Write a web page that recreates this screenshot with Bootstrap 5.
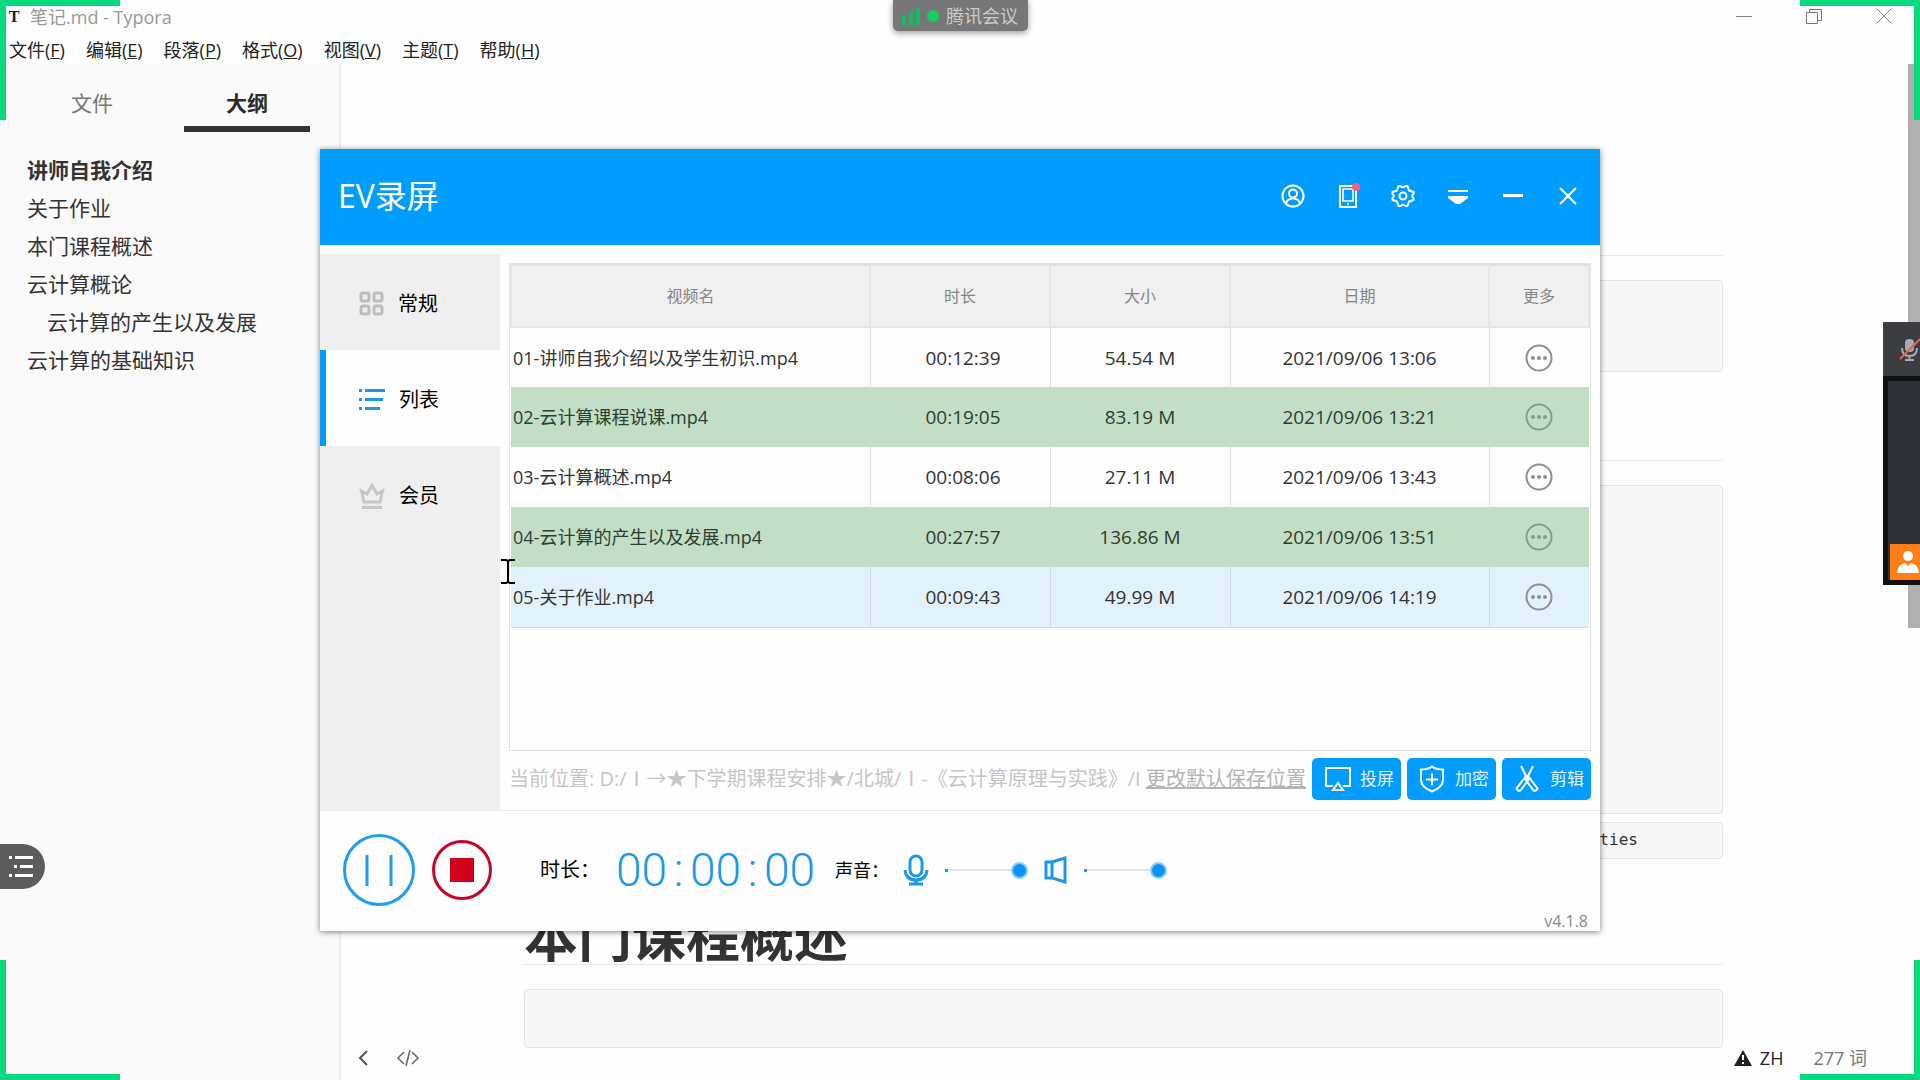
<!DOCTYPE html>
<html lang="zh-CN">
<head>
<meta charset="utf-8">
<meta name="viewport" content="width=device-width, initial-scale=1">
<title>笔记.md - Typora</title>
<link href="https://cdn.jsdelivr.net/npm/bootstrap@5.3.0/dist/css/bootstrap.min.css" rel="stylesheet">
<style>
  :root { --ev: #009dff; --sun: #07d980; }
  body { font-family: "Open Sans", "Noto Sans CJK SC", sans-serif; font-size: 18px; line-height: 24px; color: #333; background: #fefefe; overflow: hidden; }
  button { font-family: inherit; }
  svg { display: block; flex: none; }
  a { color: inherit; text-decoration: none; }
  .plain { background: none; border: 0; padding: 0; color: inherit; }

  /* editor window */
  .titlebar { height: 34px; padding: 0 28px 0 6px; color: #999; }
  .logo-t { width: 16px; font: bold 16px "Liberation Serif", serif; color: #222; text-align: center; }
  .win-ctl { gap: 54px; padding-bottom: 2px; }
  .menubar { height: 30px; padding: 2px 0 0 9px; gap: 21px; color: #222; }
  .outline-pane { width: 341px; background: #fafafa; border-right: 2px solid #ececec; }
  .pane-tabs { padding: 16px 29px 0; }
  .pane-tabs button { width: 126px; height: 52px; font-size: 21px; color: #777; border-bottom: 6px solid transparent; }
  .pane-tabs button.active { color: #2b2b2b; font-weight: 700; border-color: #333; }
  .outline-list { padding: 19px 27px; font-size: 21px; line-height: 38px; }
  .doc-area { padding-right: 2px; }
  .doc { max-width: 1200px; width: 76.6%; padding-top: 191px; }
  .doc-head { border-bottom: 1px solid #e8e8e8; font-size: 54px; line-height: 56px; font-weight: 700; margin: 0; }
  .code-box { background: #f7f7f7; border: 1px solid #e5e5e5; border-radius: 4px; font: 16px/34px "DejaVu Sans Mono", monospace; }
  .scroll-thumb { width: 12px; height: 564px; background: #b0b0b0; }
  .status-left { left: 356px; bottom: 12px; gap: 26px; color: #555; }
  .status-right { right: 53px; bottom: 10px; color: #777; }

  /* recorder window */
  .ev { top: 149px; left: 50%; width: 1280px; margin-left: -640px; background: #fefefe; box-shadow: 0 1px 6px rgba(0,0,0,.5); }
  .ev-head { height: 96px; padding: 0 20px 2px 18px; background: var(--ev); color: #fff; }
  .ev-title { font-size: 32px; line-height: 40px; }
  .ev-tools { gap: 31px; }
  .ev-side { width: 180px; margin-top: 9px; background: #efefef; }
  .ev-side button { height: 96px; padding: 3px 0 0 33px; gap: 14px; font-size: 20px; color: #000; border-left: 6px solid transparent; }
  .ev-side button.active { background: #fefefe; border-color: var(--ev); }
  .ev-main { padding: 18px 9px 10px; min-width: 0; }
  .ev-list { height: 488px; border: 1px solid #e4e4e4; }
  .ev-table { table-layout: fixed; width: 100%; text-align: center; font-size: 19px; }
  .ev-table th { height: 62px; font-size: 16px; font-weight: 400; color: #858585; background: #f0f0f0; border: 2px solid #e6e6e6; border-top-color: #e0e0e0; padding: 0; }
  .ev-table td { height: 60px; border-right: 1px solid #dcdcdc; padding: 0; }
  .ev-table td:last-child { border-right: 0; }
  .ev-table td:first-child { text-align: left; padding-left: 2px; font-size: 18px; }
  .ev-table td:nth-child(2) { padding-left: 6px; }
  .ev-table tr.done td { background: #c4dec6; border-color: #c4dec6; }
  .ev-table tr.done { color: #2c3f30; }
  .ev-table tr.done svg { color: #82a085; }
  .ev-table tr.hovered td { background: #e2f2fc; border-color: #cfdde6; border-bottom: 1px solid #cfdde6; }
  .ev-table svg { color: #8e8e8e; }
  .path-row { margin-top: 7px; gap: 6px; font-size: 20px; color: #c6c6c6; }
  .path-row a { color: #b4b4b4; text-decoration: underline; }
  .ev-btn { width: 89px; height: 42px; background: var(--ev); border: 0; border-radius: 5px; color: #e4f4ff; font-size: 17px; padding: 0 7px 0 12px; }
  .ev-foot { height: 121px; padding: 0 22px 2px; border-top: 1px solid #ececec; color: #000; }
  .lcd { font: 46px/60px Roboto, sans-serif; font-weight: 300; color: #1a98ea; }
  .lcd i { font-style: normal; width: 23px; text-align: center; }
  .vol { -webkit-appearance: none; appearance: none; width: 83px; height: 18px; background: linear-gradient(#1a98ea,#1a98ea) 0 8px/3px 3px no-repeat, linear-gradient(#e2e5e7,#e2e5e7) 0 8px/100% 2px no-repeat; }
  .vol::-webkit-slider-thumb { -webkit-appearance: none; width: 17px; height: 17px; border-radius: 50%; background: #0a93fb; border: 2px solid #8cccf8; }
  .version { right: 12px; bottom: 0; font-size: 16px; line-height: 20px; color: #888; }

  /* meeting overlays */
  .meet-tag { top: 0; left: 50%; width: 135px; height: 31px; margin-left: -67px; background: #777; color: #ccc; border-radius: 0 0 5px 5px; box-shadow: 0 2px 6px rgba(0,0,0,.4); gap: 7px; padding-left: 9px; }
  .corner { width: 120px; height: 120px; pointer-events: none; border: 0 solid var(--sun); z-index: 5; }
  .c-tl { top: 0; left: 0; border-width: 6px 0 0 6px; }
  .c-tr { top: 0; right: 0; border-width: 6px 6px 0 0; }
  .c-bl { bottom: 0; left: 0; border-width: 0 0 6px 6px; }
  .c-br { bottom: 0; right: 0; border-width: 0 6px 6px 0; }
  .meet-side { top: 322px; right: 0; width: 37px; background: #2e3135; }
  .meet-mic { height: 54px; background: #3c3d41; padding-left: 14px; }
  .meet-cam { height: 209px; border: solid #101113; border-width: 5px 0 5px 5px; }
  .meet-user { width: 30px; height: 36px; background: #ff7f16; }
  .meet-pill { left: 0; top: 844px; width: 45px; height: 45px; background: #5c5c5c; border-radius: 0 23px 23px 0; padding-left: 9px; }
  .ibeam { left: 501px; top: 559px; }
</style>
</head>
<body>
<div class="d-flex flex-column vh-100 position-relative overflow-hidden">
  <header class="titlebar d-flex align-items-center">
    <span class="logo-t">T</span>
    <span class="ms-2">笔记.md - Typora</span>
    <div class="win-ctl d-flex align-items-center ms-auto">
      <button class="plain" aria-label="最小化"><svg width="16" height="16" fill="none" stroke="#888"><path d="M0 8.5h16"/></svg></button>
      <button class="plain" aria-label="还原"><svg width="16" height="16" fill="none" stroke="#777"><path d="M.5 4.5h11v11H.5zM3.500 4V1.500h12v11H12"/></svg></button>
      <button class="plain" aria-label="关闭"><svg width="16" height="16" fill="none" stroke="#888"><path d="M.5.5l15 15M15.500.5l-15 15"/></svg></button>
    </div>
  </header>
  <nav class="menubar d-flex align-items-center">
    <a href="#">文件(<u>F</u>)</a><a href="#">编辑(<u>E</u>)</a><a href="#">段落(<u>P</u>)</a><a href="#">格式(<u>O</u>)</a><a href="#">视图(<u>V</u>)</a><a href="#">主题(<u>T</u>)</a><a href="#">帮助(<u>H</u>)</a>
  </nav>
  <div class="d-flex flex-grow-1 overflow-hidden">
    <aside class="outline-pane flex-shrink-0">
      <div class="pane-tabs d-flex justify-content-between">
        <button class="plain">文件</button>
        <button class="plain active">大纲</button>
      </div>
      <ul class="outline-list list-unstyled mb-0">
        <li class="fw-bold">讲师自我介绍</li>
        <li>关于作业</li>
        <li>本门课程概述</li>
        <li>云计算概论</li>
        <li class="ps-3"><span class="ms-1">云计算的产生以及发展</span></li>
        <li>云计算的基础知识</li>
      </ul>
    </aside>
    <main class="doc-area flex-grow-1 d-flex justify-content-center">
      <article class="doc">
        <div class="doc-head"></div>
        <div class="code-box mt-4" style="height:92px"></div>
        <div class="doc-head" style="margin-top:88px"></div>
        <div class="code-box mt-4" style="height:329px"></div>
        <div class="code-box mt-2 text-end" style="height:37px;padding-right:84px">ties</div>
        <h1 class="doc-head" style="margin-top:49px">本门课程概述</h1>
        <div class="code-box mt-4" style="height:59px"></div>
      </article>
    </main>
    <div class="scroll-thumb flex-shrink-0"></div>
  </div>

  <div class="status-left position-absolute d-flex align-items-center">
    <button class="plain" aria-label="收起侧栏"><svg width="14" height="20" fill="none" stroke="#555" stroke-width="2"><path d="M11 3L4 10l7 7"/></svg></button>
    <button class="plain" aria-label="源代码模式"><svg width="24" height="20" fill="none" stroke="#666" stroke-width="1.500"><path d="M8 4L2 10l6 6M16 4l6 6-6 6M14 2l-4 16"/></svg></button>
  </div>
  <div class="status-right position-absolute d-flex align-items-center">
    <svg width="18" height="16" viewBox="0 0 18 16"><path fill="#222" d="M9 0l9 16H0z"/><path stroke="#fff" stroke-width="2" d="M9 5v5M9 12v2"/></svg>
    <span class="ms-2 text-dark">ZH</span>
    <span style="margin-left:30px">277 词</span>
  </div>

  <section class="ev position-absolute">
    <header class="ev-head d-flex align-items-center justify-content-between">
      <div class="ev-title">EV录屏</div>
      <div class="ev-tools d-flex align-items-center">
        <button class="plain" aria-label="账户"><svg width="24" height="24" fill="none" stroke="#fff" stroke-width="2"><circle cx="12" cy="12" r="10.500"/><circle cx="12" cy="9.500" r="4"/><path d="M5 19.500c1-4 3.500-5 7-5s6 1 7 5"/></svg></button>
        <button class="plain" aria-label="手机"><svg width="24" height="26" fill="none" stroke="#fff" stroke-width="2"><path d="M4 3h16v21H4z"/><path stroke-width="1.500" d="M7 6h10v12H7z"/><circle cx="12" cy="21" r="1" fill="#fff" stroke="none"/><circle cx="20" cy="4" r="4" fill="#ff5d7e" stroke="none"/></svg></button>
        <button class="plain" aria-label="设置"><svg width="24" height="24" viewBox="0 0 24 24" fill="none" stroke="#fff" stroke-width="2" stroke-linejoin="round"><path d="M7.500 2h2Q12 4.500 14.500 2h2l1.500 4.500 4.500 1.500v2Q20 12 22.500 14v2L18 17.500 16.500 22h-2Q12 19.500 9.500 22h-2L6 17.500 1.500 16v-2Q4 12 1.500 10V8L6 6.500z"/><circle cx="12" cy="12" r="3.500"/></svg></button>
        <button class="plain" aria-label="菜单"><svg width="24" height="24" fill="#fff"><path d="M2 6h20v2H2zM2 12h20v2l-8 6h-4l-8-6z"/></svg></button>
        <button class="plain" aria-label="最小化窗口"><svg width="24" height="24" fill="#fff"><path d="M2 10h20v3H2z"/></svg></button>
        <button class="plain" aria-label="关闭窗口"><svg width="24" height="24" fill="none" stroke="#fff" stroke-width="2"><path d="M4 4l16 16M20 4L4 20"/></svg></button>
      </div>
    </header>
    <div class="d-flex">
      <nav class="ev-side d-flex flex-column flex-shrink-0">
        <button class="plain d-flex align-items-center"><svg width="25" height="26" fill="none" stroke="#bdbdbd" stroke-width="3"><rect x="2" y="2" width="8" height="8" rx="2"/><rect x="15" y="2" width="8" height="8" rx="2"/><rect x="2" y="15" width="8" height="8" rx="2"/><rect x="15" y="15" width="8" height="8" rx="2"/></svg>常规</button>
        <button class="plain active d-flex align-items-center"><svg width="26" height="24" fill="#1a98ea"><path d="M0 1h3v3H0zM6 1h20v3H6zM0 10h3v3H0zM6 10h18v3H6zM0 19h3v3H0zM6 19h15v3H6z"/></svg>列表</button>
        <button class="plain d-flex align-items-center"><svg width="26" height="28" fill="none" stroke="#c6c6c6" stroke-width="3"><path d="M5 20L2.500 9 8 12l5-8.500L18 12l5.500-3L21 20zM3 25.500h20"/></svg>会员</button>
      </nav>
      <div class="ev-main flex-grow-1">
        <div class="ev-list">
          <table class="ev-table">
            <colgroup><col style="width:359px"><col style="width:180px"><col style="width:180px"><col style="width:259px"><col></colgroup>
            <thead><tr><th>视频名</th><th>时长</th><th>大小</th><th>日期</th><th>更多</th></tr></thead>
            <tbody>
              <tr><td>01-讲师自我介绍以及学生初识.mp4</td><td>00:12:39</td><td>54.54 M</td><td>2021/09/06 13:06</td><td><button class="plain d-block mx-auto" aria-label="更多"><svg width="28" height="28" fill="currentColor"><circle cx="14" cy="14" r="12.500" fill="none" stroke="currentColor" stroke-width="2"/><circle cx="8" cy="14" r="2"/><circle cx="14" cy="14" r="2"/><circle cx="20" cy="14" r="2"/></svg></button></td></tr>
              <tr class="done"><td>02-云计算课程说课.mp4</td><td>00:19:05</td><td>83.19 M</td><td>2021/09/06 13:21</td><td><button class="plain d-block mx-auto" aria-label="更多"><svg width="28" height="28" fill="currentColor"><circle cx="14" cy="14" r="12.500" fill="none" stroke="currentColor" stroke-width="2"/><circle cx="8" cy="14" r="2"/><circle cx="14" cy="14" r="2"/><circle cx="20" cy="14" r="2"/></svg></button></td></tr>
              <tr><td>03-云计算概述.mp4</td><td>00:08:06</td><td>27.11 M</td><td>2021/09/06 13:43</td><td><button class="plain d-block mx-auto" aria-label="更多"><svg width="28" height="28" fill="currentColor"><circle cx="14" cy="14" r="12.500" fill="none" stroke="currentColor" stroke-width="2"/><circle cx="8" cy="14" r="2"/><circle cx="14" cy="14" r="2"/><circle cx="20" cy="14" r="2"/></svg></button></td></tr>
              <tr class="done"><td>04-云计算的产生以及发展.mp4</td><td>00:27:57</td><td>136.86 M</td><td>2021/09/06 13:51</td><td><button class="plain d-block mx-auto" aria-label="更多"><svg width="28" height="28" fill="currentColor"><circle cx="14" cy="14" r="12.500" fill="none" stroke="currentColor" stroke-width="2"/><circle cx="8" cy="14" r="2"/><circle cx="14" cy="14" r="2"/><circle cx="20" cy="14" r="2"/></svg></button></td></tr>
              <tr class="hovered"><td>05-关于作业.mp4</td><td>00:09:43</td><td>49.99 M</td><td>2021/09/06 14:19</td><td><button class="plain d-block mx-auto" aria-label="更多"><svg width="28" height="28" fill="currentColor"><circle cx="14" cy="14" r="12.500" fill="none" stroke="currentColor" stroke-width="2"/><circle cx="8" cy="14" r="2"/><circle cx="14" cy="14" r="2"/><circle cx="20" cy="14" r="2"/></svg></button></td></tr>
            </tbody>
          </table>
        </div>
        <div class="path-row d-flex align-items-center">
          <div class="flex-grow-1 overflow-hidden text-nowrap" style="width:0">当前位置: D:/Ⅰ→★下学期课程安排★/北城/Ⅰ-《云计算原理与实践》/I</div>
          <a href="#" class="text-nowrap">更改默认保存位置</a>
          <button class="ev-btn d-flex align-items-center justify-content-between"><svg width="28" height="28" fill="none" stroke="#fff" stroke-width="2"><path d="M9 21H2V3h24v18h-7"/><path d="M9 25l5-7 5 7z"/></svg>投屏</button>
          <button class="ev-btn d-flex align-items-center justify-content-between"><svg width="26" height="28" fill="none" stroke="#fff" stroke-width="2"><path d="M13 1.500Q17 4.500 24 4.500V15q0 7-11 11.500Q2 22 2 15V4.500Q9 4.500 13 1.500zM13 8.500v12M7 14.500h12"/></svg>加密</button>
          <button class="ev-btn d-flex align-items-center justify-content-between"><svg width="26" height="28" fill="none" stroke="#fff" stroke-width="2"><path d="M7 1l5 10 2 5M19 1l-5 10-2 5M12 11L2.500 23.500q1 3 4 2L15 14zM14 11l9.500 12.500q-1 3-4 2L11 14z"/></svg>剪辑</button>
        </div>
      </div>
    </div>
    <footer class="ev-foot d-flex align-items-center position-relative">
      <button class="plain" aria-label="暂停"><svg width="74" height="74" fill="none" stroke="#1f9df2" stroke-width="3"><circle cx="37" cy="37" r="34.500"/><path d="M25 22v31M49 22v31"/></svg></button>
      <button class="plain ms-3" aria-label="停止"><svg width="60" height="60" fill="none" stroke="#c5052a" stroke-width="3"><circle cx="30" cy="30" r="28.500"/><path fill="#d0021b" stroke="none" d="M18 18h24v24H18z"/></svg></button>
      <span style="margin-left:48px;font-size:20px;width:76px">时长：</span>
      <div class="lcd d-flex" role="timer"><span>00</span><i>:</i><span>00</span><i>:</i><span>00</span></div>
      <span style="margin-left:20px;width:64px">声音：</span>
      <svg class="ms-1" width="26" height="32" fill="none" stroke="#1a98ea" stroke-width="3"><rect x="7" y="2" width="12" height="20" rx="6"/><path d="M2 16q1 10 11 10t11-10M13 26v4M6 30h14"/></svg>
      <input class="vol ms-3" type="range" value="100" aria-label="麦克风音量">
      <svg class="ms-3" width="24" height="28" fill="none" stroke="#1a98ea" stroke-width="3"><path d="M2 6h6v16H2zM8 6l13-4v24L8 22z"/></svg>
      <input class="vol ms-3" type="range" value="100" aria-label="扬声器音量">
      <span class="version position-absolute">v4.1.8</span>
    </footer>
  </section>

  <svg class="ibeam position-absolute" width="14" height="25" fill="none" stroke="#000" stroke-width="2"><path d="M0 1h5l2 1 2-1h5M7 2v21M0 24h5l2-1 2 1h5"/></svg>

  <div class="meet-tag position-absolute d-flex align-items-center">
    <svg width="18" height="18" fill="#0fbf62"><path d="M0 9h4v9H0zM7 5h4v13H7zM14 1h4v17h-4z"/></svg>
    <svg width="12" height="12" fill="#12cf60"><circle cx="6" cy="6" r="6"/></svg>
    <span>腾讯会议</span>
  </div>
  <div class="meet-side position-absolute overflow-hidden">
    <div class="meet-mic d-flex align-items-center"><svg width="26" height="26" fill="none" stroke="#a5acb4" stroke-width="2"><rect x="8" y="3" width="9" height="13" rx="4" fill="#a5acb4" stroke="none"/><path d="M5 12q0 8 7.500 8t7.500-8M12.500 20v4M8 24h9"/><path stroke="#f0604f" d="M3 23L23 3"/></svg></div>
    <div class="meet-cam d-flex align-items-end justify-content-end"><div class="meet-user d-flex align-items-center justify-content-end"><svg width="24" height="24" fill="#fff"><circle cx="12" cy="6" r="5"/><path d="M1 23q1-9 8-10l3 3 3-3q7 1 8 10z"/></svg></div></div>
  </div>
  <button class="meet-pill plain position-absolute d-flex align-items-center" aria-label="目录"><svg width="24" height="23" fill="#fff"><path d="M0 1h3v3H0zM6 1h18v3H6zM5 10h3v3H5zM11 10h13v3H11zM0 19h3v3H0zM6 19h18v3H6z"/></svg></button>
  <div class="corner c-tl position-absolute"></div><div class="corner c-tr position-absolute"></div><div class="corner c-bl position-absolute"></div><div class="corner c-br position-absolute"></div>
</div>
<script src="https://cdn.jsdelivr.net/npm/bootstrap@5.3.0/dist/js/bootstrap.bundle.min.js"></script>
</body>
</html>
